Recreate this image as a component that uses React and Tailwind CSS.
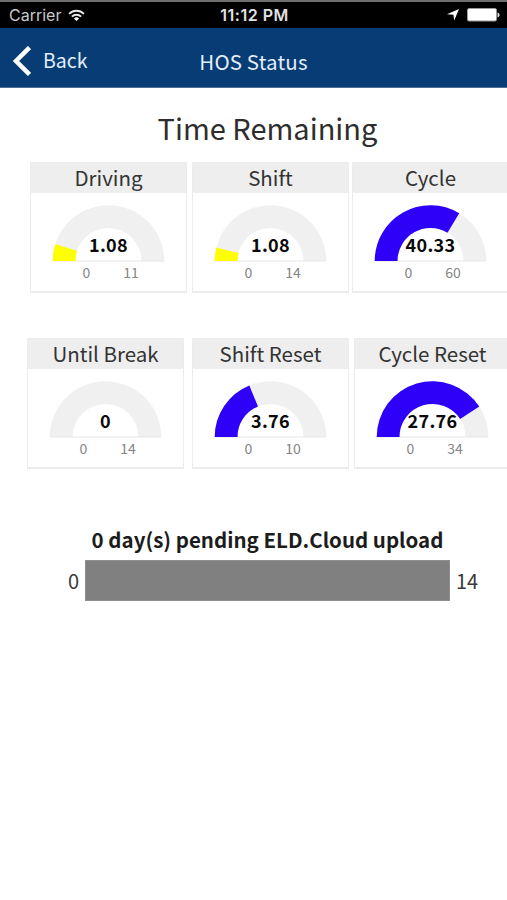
import React from "react";

const FONT = "font-['Noto_Sans_CJK_SC','Noto_Sans',sans-serif]";

const OUTER = 55.8;
const INNER = 33;
const CX = 77.5;
const CY = 68;

function arc(fraction) {
  const a = Math.PI * (1 - fraction);
  const p = (r) => `${CX + r * Math.cos(a)} ${CY - r * Math.sin(a)}`;
  return `M${CX - OUTER} ${CY} A${OUTER} ${OUTER} 0 0 1 ${p(OUTER)} L${p(INNER)} A${INNER} ${INNER} 0 0 0 ${CX - INNER} ${CY} Z`;
}

function Gauge({ value, max, color }) {
  const fraction = Math.min(1, Number(value) / max);
  return (
    <svg width="156" height="98" viewBox="0 0 156 98" className={`block ${FONT}`}>
      <path d={arc(1)} fill="#f0f0f0" />
      <path d={`M${CX - OUTER} ${CY}H${CX + OUTER}`} stroke="#e6e6e6" strokeWidth="1" />
      {fraction > 0 && <path d={arc(fraction)} fill={color} />}
      <text x={CX} y="59" textAnchor="middle" className="text-[18px] font-bold tracking-[0.3px]" fill="#0a0a0a">{value}</text>
      <text x="55.5" y="85" textAnchor="middle" className="text-[14px]" fill="#858585">0</text>
      <text x="100" y="85" textAnchor="middle" className="text-[14px]" fill="#858585">{max}</text>
    </svg>
  );
}

function Card({ title, ...gauge }) {
  return (
    <section className="w-[157px] h-[131px] shrink-0 border border-[#ececec] border-b-2 bg-white overflow-hidden">
      <h2 className="h-[30px] bg-[#eeeeee] text-center text-[20.5px] leading-[29px] text-[#333] whitespace-nowrap">{title}</h2>
      <Gauge {...gauge} />
    </section>
  );
}

function StatusBar() {
  return (
    <div className="h-[28px] bg-black border-t-2 border-[#6e6e6e] grid grid-cols-3 items-center pl-[9px] pr-[7px] text-[16px] leading-[26px] font-['Inter','Liberation_Sans',sans-serif]">
      <div className="flex items-center gap-[7px] text-[#c8c8c8]">
        <span>Carrier</span>
        <svg width="17" height="13" viewBox="0 0 18 14" fill="none" stroke="#e8e8e8" strokeWidth="2">
          <path d="M1 5.2a11.3 11.3 0 0 1 16 0" />
          <path d="M4 8.3a7 7 0 0 1 10 0" />
          <path d="M9 13 6.2 10.2a4 4 0 0 1 5.6 0Z" fill="#fff" stroke="none" />
        </svg>
      </div>
      <div className="text-center font-semibold text-[16px] tracking-[0.5px] text-[#e2e2e2] whitespace-nowrap">11:12 PM</div>
      <div className="flex items-center justify-end gap-[8px]">
        <svg width="12" height="12" viewBox="0 0 12 12" fill="#fff">
          <path d="M12 0 7.2 11.5 6.4 5.8 0 5.2Z" />
        </svg>
        <svg width="33" height="14" viewBox="0 0 33 14">
          <rect x="0.5" y="0.5" width="29" height="12.5" rx="1.5" fill="#fff" stroke="#999" />
          <path d="M30.5 4.5c1.600.5 2 1.400 2 2.500s-.4 2-2 2.500Z" fill="#ddd" />
        </svg>
      </div>
    </div>
  );
}

function NavBar() {
  return (
    <header className="h-[60px] bg-[#073c75] border-b border-[#4c719a] grid grid-cols-[1fr_auto_1fr] items-center text-[#e4eefc] text-[20.5px] leading-[30px]">
      <button className="flex items-center gap-[12px] pl-[12px] pt-[6px] text-left">
        <svg width="19" height="30" viewBox="0 0 19 30" fill="none" stroke="#fff" strokeWidth="4.5">
          <path d="M17.5 1.5 4 15 17.5 28.5" />
        </svg>
        <span className="-mt-[2px] text-[19.5px]">Back</span>
      </button>
      <h1 className="pt-[6px] tracking-[0.15px]">HOS Status</h1>
      <span />
    </header>
  );
}

export default function App() {
  return (
    <div className={`w-[507px] h-[900px] bg-white overflow-hidden ${FONT}`}>
      <StatusBar />
      <NavBar />
      <main>
        <h2 className="mt-[18px] ml-[28px] text-center text-[29px] leading-[42px] text-[#2d2d2d]">Time Remaining</h2>
        <div className="flex mt-[14px] ml-[30px] gap-[5px]">
          <Card title="Driving" value="1.08" max={11} color="#ffff00" />
          <Card title="Shift" value="1.08" max={14} color="#ffff00" />
          <div className="-ml-[2px]">
            <Card title="Cycle" value="40.33" max={60} color="#2f00f7" />
          </div>
        </div>
        <div className="flex mt-[45px] ml-[27px] gap-[6px]">
          <Card title="Until Break" value="0" max={14} color="#2f00f7" />
          <div className="ml-[2px]">
            <Card title="Shift Reset" value="3.76" max={10} color="#2f00f7" />
          </div>
          <div className="-ml-[1px]">
            <Card title="Cycle Reset" value="27.76" max={34} color="#2f00f7" />
          </div>
        </div>
        <div className="mt-[55px] ml-[28px]">
          <p className="text-center text-[20.5px] leading-[30px] font-bold text-[#1c1c1c]">0 day(s) pending ELD.Cloud upload</p>
        </div>
        <div className="flex items-center mt-[6px] ml-[68px] text-[20px] leading-[30px] text-[#3a3a3a]">
          <span className="w-[17px]">0</span>
          <div className="w-[365px] h-[41px] bg-[#808080] border border-[#8f8f8f]" />
          <span className="ml-[6px]">14</span>
        </div>
      </main>
    </div>
  );
}
